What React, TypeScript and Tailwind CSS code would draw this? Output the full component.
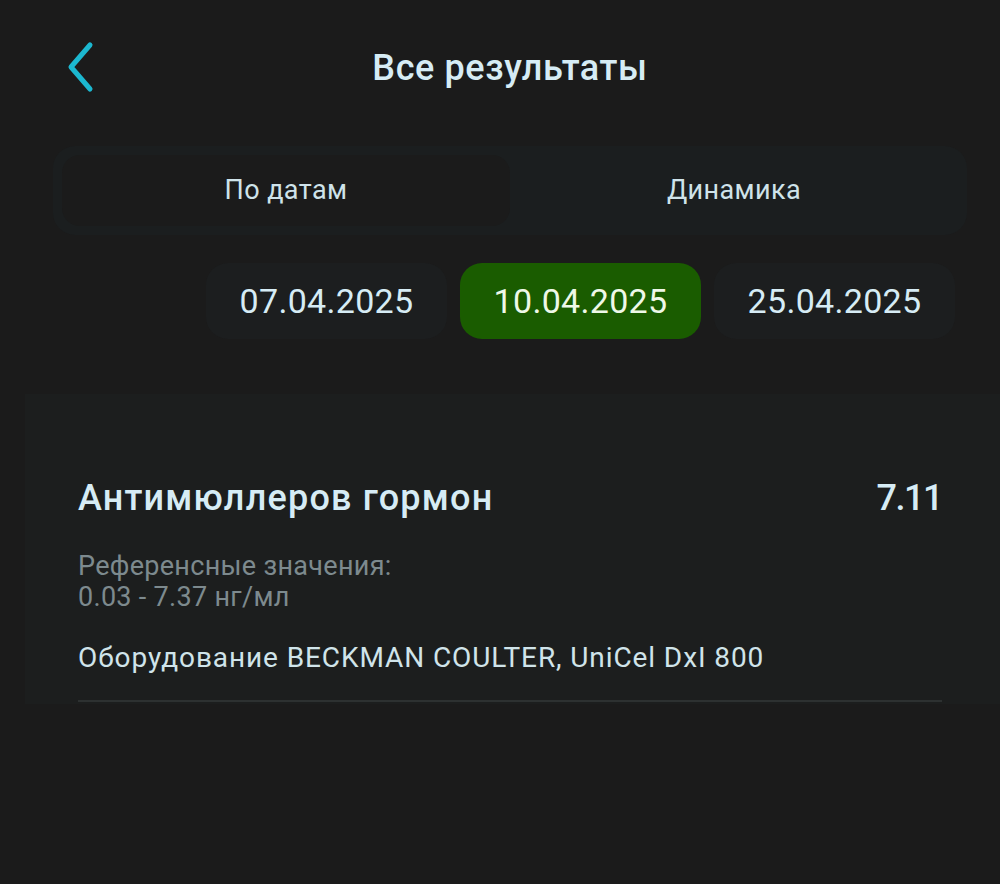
import { useState } from 'react';

const dates = ['07.04.2025', '10.04.2025', '25.04.2025'];

export default function App() {
  const [tab, setTab] = useState(0);
  const [date, setDate] = useState(1);

  return (
    <div
      className="w-[1000px] h-[884px] bg-[#1b1b1b] text-[#d6ecf5] overflow-hidden"
      style={{ fontFamily: 'Roboto, "Noto Sans", sans-serif' }}
    >
      {/* header */}
      <div className="relative h-[138px] flex items-start justify-center pt-[42px]">
        <button className="absolute left-[62px] top-[40px] w-[36px] h-[54px] flex items-center justify-center">
          <svg width="30" height="52" viewBox="0 0 30 52" fill="none">
            <path d="M25 4 L6 26 L25 48" stroke="#1cb8d0" strokeWidth="5" strokeLinecap="round" strokeLinejoin="round" />
          </svg>
        </button>
        <h1 className="text-[36px] font-medium leading-[52px] tracking-[0.6px] ml-[20px]">Все результаты</h1>
      </div>

      {/* tabs */}
      <div className="ml-[53px] mr-[33px] mt-[8px] h-[89px] rounded-[22px] bg-[#1b1e1f] p-[9px] flex">
        {['По датам', 'Динамика'].map((t, i) => (
          <button
            key={t}
            onClick={() => setTab(i)}
            className={
              'flex-1 rounded-[18px] text-[27px] tracking-[0.4px] text-[#cfe3ea] flex items-center justify-center ' +
              (tab === i ? 'bg-[#1b1b1b]' : '')
            }
          >
            {t}
          </button>
        ))}
      </div>

      {/* dates */}
      <div className="flex justify-end gap-[13px] pr-[45px] mt-[28px]">
        {dates.map((d, i) => (
          <button
            key={d}
            onClick={() => setDate(i)}
            className={
              'w-[241px] h-[76px] rounded-[22px] text-[34px] tracking-[0.3px] flex items-center justify-center ' +
              (date === i ? 'bg-[#1a5c00] text-[#eef8e8]' : 'bg-[#1c1e1f] text-[#d6ecf5]')
            }
          >
            {d}
          </button>
        ))}
      </div>

      {/* card */}
      <div className="ml-[25px] mt-[55px] bg-[#1c1e1e] pt-[83px] pl-[53px] pr-[58px] h-[310px]">
        <div className="flex justify-between items-center leading-[42px]">
          <div className="text-[36px] font-medium tracking-[1.2px]">Антимюллеров гормон</div>
          <div className="text-[36px] font-medium tracking-[-1.5px]">7.11</div>
        </div>
        <div className="mt-[32px] text-[27px] leading-[31px] tracking-[0.3px] text-[#7d8a8e]">
          <div>Референсные значения:</div>
          <div>0.03 - 7.37 нг/мл</div>
        </div>
        <div className="mt-[28px] text-[28px] leading-[34px] tracking-[0.9px] text-[#d0e4ea]">
          Оборудование BECKMAN COULTER, UniCel DxI 800
        </div>
        <div className="mt-[25px] h-[2px] bg-[#2d3131]" />
      </div>
    </div>
  );
}
